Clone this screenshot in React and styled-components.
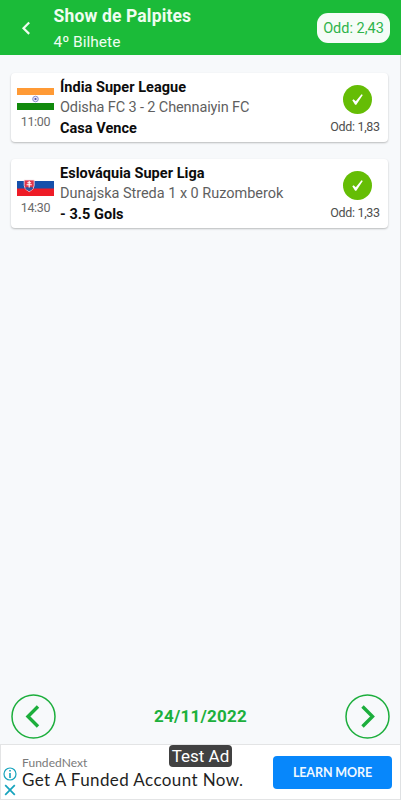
import React from "react";
import styled, { createGlobalStyle } from "styled-components";

const GlobalStyle = createGlobalStyle`
    * {
        box-sizing: border-box;
    }

    body {
        margin: 0;
        font-family: Roboto, "Liberation Sans", sans-serif;
        background-color: #f7f9fb;
    }

    button {
        border: none;
        background: none;
        padding: 0;
        margin: 0;
        font-family: inherit;
    }

    svg {
        display: block;
    }
`;

const Screen = styled.div`
    width: 401px;
    height: 800px;
    display: flex;
    flex-direction: column;
    overflow: hidden;
`;

const Header = styled.header`
    height: 55px;
    flex-shrink: 0;
    display: flex;
    align-items: center;
    padding: 0 11px 0 21px;
    background-color: #1bbb39;
    color: #effdf0;
`;

const BackButton = styled.button`
    width: 10px;
    height: 14px;
    margin-right: 22.5px;
`;

const HeaderTitles = styled.div`
    flex: 1;
    height: 55px;
    padding-top: 4px;
`;

const Title = styled.h1`
    margin: 0;
    font-size: 17.5px;
    line-height: 25px;
    font-weight: 700;
    letter-spacing: 0.15px;
    white-space: nowrap;
`;

const Subtitle = styled.div`
    margin-top: 1px;
    font-size: 15.5px;
    line-height: 25px;
`;

const TotalOdd = styled.div`
    width: 73px;
    height: 30px;
    border-radius: 11px;
    background-color: #f5fcf7;
    color: #2eb34a;
    font-size: 14.5px;
    line-height: 31px;
    text-align: center;
    white-space: nowrap;
`;

const Content = styled.main`
    flex: 1;
    display: flex;
    flex-direction: column;
    border-right: 1px solid #dfe1e3;
`;

const BetList = styled.div`
    flex: 1;
    display: flex;
    flex-direction: column;
    gap: 17px;
    padding: 18px 12px 0 11px;
`;

const Card = styled.article`
    height: 69px;
    display: flex;
    padding-left: 6px;
    border-radius: 4px;
    background-color: #ffffff;
    box-shadow: 0 1px 2px rgba(0, 0, 0, 0.25);
`;

const FlagColumn = styled.div`
    width: 37px;
    height: 57px;
    margin-right: 6px;
    display: flex;
    flex-direction: column;
    justify-content: flex-end;
    align-items: center;
`;

const Time = styled.span`
    margin-top: 3px;
    font-size: 12.5px;
    line-height: 17px;
    letter-spacing: -0.3px;
    color: #6a6a6a;
`;

const BetInfo = styled.div`
    flex: 1;
    padding-top: 4px;
    white-space: nowrap;
`;

const League = styled.div`
    font-size: 14.5px;
    line-height: 21px;
    font-weight: 700;
    letter-spacing: 0.04px;
    color: #0c0c0c;
`;

const Match = styled.div`
    font-size: 14.5px;
    line-height: 20px;
    letter-spacing: ${({ $spacing }) => $spacing};
    color: #5f5f5f;
`;

const OddColumn = styled.div`
    width: 61px;
    padding-top: 12px;
    display: flex;
    flex-direction: column;
    align-items: center;
`;

const Odd = styled.span`
    margin: 4px 5px 0 0;
    font-size: 12.5px;
    line-height: 17px;
    letter-spacing: -0.3px;
    color: #4e4e4e;
    white-space: nowrap;
`;

const DateBar = styled.nav`
    height: 50px;
    display: flex;
    justify-content: space-between;
    align-items: flex-start;
    padding: 0 10px 0 11px;
`;

const DateLabel = styled.span`
    margin-top: 11px;
    font-size: 17px;
    line-height: 22px;
    font-weight: 700;
    letter-spacing: 0.25px;
    color: #1cb03c;
`;

const Ad = styled.aside`
    position: relative;
    height: 56px;
    display: flex;
    align-items: flex-start;
    padding: 11px 8px 0 2px;
    border: 1px solid #e3e4e5;
    border-right: none;
    background-color: #ffffff;
    font-family: Lato, "Liberation Sans", sans-serif;
`;

const AdIcons = styled.div`
    width: 14px;
    margin: 11px 5px 0 0;
    display: flex;
    flex-direction: column;
    gap: 2px;
`;

const AdText = styled.div`
    flex: 1;
    white-space: nowrap;
`;

const Advertiser = styled.div`
    font-size: 12px;
    line-height: 13px;
    letter-spacing: 0.05px;
    color: #7a7a7a;
`;

const AdHeadline = styled.div`
    font-size: 17px;
    line-height: 21px;
    letter-spacing: 0.4px;
    color: #1f1f1f;
`;

const LearnMore = styled.button`
    width: 119px;
    height: 33px;
    border-radius: 4px;
    background-color: #0787fb;
    color: #f0f8ff;
    font-size: 12.5px;
    font-weight: 700;
    letter-spacing: -0.1px;
`;

const TestAd = styled.div`
    position: absolute;
    top: 0;
    left: 168px;
    width: 63px;
    height: 22px;
    border-radius: 4px;
    background-color: #414141;
    color: #ffffff;
    font-family: Roboto, sans-serif;
    font-size: 17px;
    line-height: 23px;
    text-align: center;
    white-space: nowrap;
`;

function IndiaFlag() {
    return (
        <svg width="37" height="22" viewBox="0 0 37 22">
            <rect width="37" height="22" fill="#fff" />
            <rect width="37" height="7" fill="#ff9a35" />
            <rect y="15" width="37" height="7" fill="#118a0c" />
            <circle cx="18.5" cy="11" r="2.8" fill="#e6e6f7" stroke="#8585c6" strokeWidth="0.9" />
            <circle cx="18.5" cy="11" r="1.1" fill="#4545a4" />
        </svg>
    );
}

function SlovakiaFlag() {
    return (
        <svg width="37" height="22" viewBox="0 0 37 22">
            <rect width="37" height="8" fill="#fff" />
            <rect y="7" width="37" height="8" fill="#1650ab" />
            <rect y="14.5" width="37" height="7.5" fill="#ee1c27" />
            <path d="M7.2 6h10v5.500q0 4-5 6.200-5-2.200-5-6.200z" fill="#e0344a" stroke="#f4e4ea" strokeWidth="0.8" />
            <path d="M8 14q2-1.500 4.200-.5 2.200-1 4.200.5-1 2-4.200 3.300Q9 16 8 14z" fill="#31539f" />
            <path d="M12.2 7v6.500M10.300 8.800h3.800M9.600 10.800h5.200" stroke="#fff" strokeWidth="1.1" />
        </svg>
    );
}

function WinIcon() {
    return (
        <svg width="29" height="29" viewBox="0 0 29 29">
            <circle cx="14.5" cy="14.5" r="14.5" fill="#65bd05" />
            <path d="M9.3 15.200l1.300-1 2.200 2 5.700-6.900 1.300.8-6.500 9.700h-1.200z" fill="#fff" />
        </svg>
    );
}

function RoundArrow({ next }) {
    return (
        <svg width="45" height="45" viewBox="0 0 45 45" fill="none" stroke="#1cae3c">
            <circle cx="22.5" cy="22.5" r="21.5" strokeWidth="1.5" />
            <path d={next ? "M17.500 12.500l10 10-10 10" : "M27 12.500l-10 10 10 10"} strokeWidth="3.4" />
        </svg>
    );
}

const bets = [
    {
        flag: <IndiaFlag />,
        time: "11:00",
        league: "Índia Super League",
        match: "Odisha FC 3 - 2 Chennaiyin FC",
        spacing: "-0.12px",
        tip: "Casa Vence",
        odd: "1,83",
    },
    {
        flag: <SlovakiaFlag />,
        time: "14:30",
        league: "Eslováquia Super Liga",
        match: "Dunajska Streda 1 x 0 Ruzomberok",
        spacing: "-0.03px",
        tip: "- 3.5 Gols",
        odd: "1,33",
    },
];

function BetCard({ bet }) {
    return (
        <Card>
            <FlagColumn>
                {bet.flag}
                <Time>{bet.time}</Time>
            </FlagColumn>
            <BetInfo>
                <League>{bet.league}</League>
                <Match $spacing={bet.spacing}>{bet.match}</Match>
                <League>{bet.tip}</League>
            </BetInfo>
            <OddColumn>
                <WinIcon />
                <Odd>Odd: {bet.odd}</Odd>
            </OddColumn>
        </Card>
    );
}

export default function App() {
    return (
        <Screen>
            <GlobalStyle />
            <Header>
                <BackButton aria-label="Voltar">
                    <svg width="10" height="14" viewBox="0 0 10 14" fill="none" stroke="#effdf0" strokeWidth="2.2">
                        <path d="M8.2 1.500L2.500 7.200l5.700 5.700" />
                    </svg>
                </BackButton>
                <HeaderTitles>
                    <Title>Show de Palpites</Title>
                    <Subtitle>4º Bilhete</Subtitle>
                </HeaderTitles>
                <TotalOdd>Odd: 2,43</TotalOdd>
            </Header>
            <Content>
                <BetList>
                    {bets.map((bet) => (
                        <BetCard key={bet.league} bet={bet} />
                    ))}
                </BetList>
                <DateBar>
                    <button aria-label="Anterior"><RoundArrow /></button>
                    <DateLabel>24/11/2022</DateLabel>
                    <button aria-label="Próximo"><RoundArrow next /></button>
                </DateBar>
                <Ad>
                    <AdIcons>
                        <svg width="14" height="14" viewBox="0 0 14 14" fill="none" stroke="#16a3bd">
                            <circle cx="7" cy="7" r="6" strokeWidth="1.2" />
                            <path d="M7 3v1.600M7 6v5" strokeWidth="1.6" />
                        </svg>
                        <svg width="14" height="14" viewBox="0 0 14 14" fill="none" stroke="#16a3bd" strokeWidth="1.7">
                            <path d="M2.200 2.200l9.600 9.600M11.800 2.200l-9.600 9.600" />
                        </svg>
                    </AdIcons>
                    <AdText>
                        <Advertiser>FundedNext</Advertiser>
                        <AdHeadline>Get A Funded Account Now.</AdHeadline>
                    </AdText>
                    <LearnMore>LEARN MORE</LearnMore>
                    <TestAd>Test Ad</TestAd>
                </Ad>
            </Content>
        </Screen>
    );
}
